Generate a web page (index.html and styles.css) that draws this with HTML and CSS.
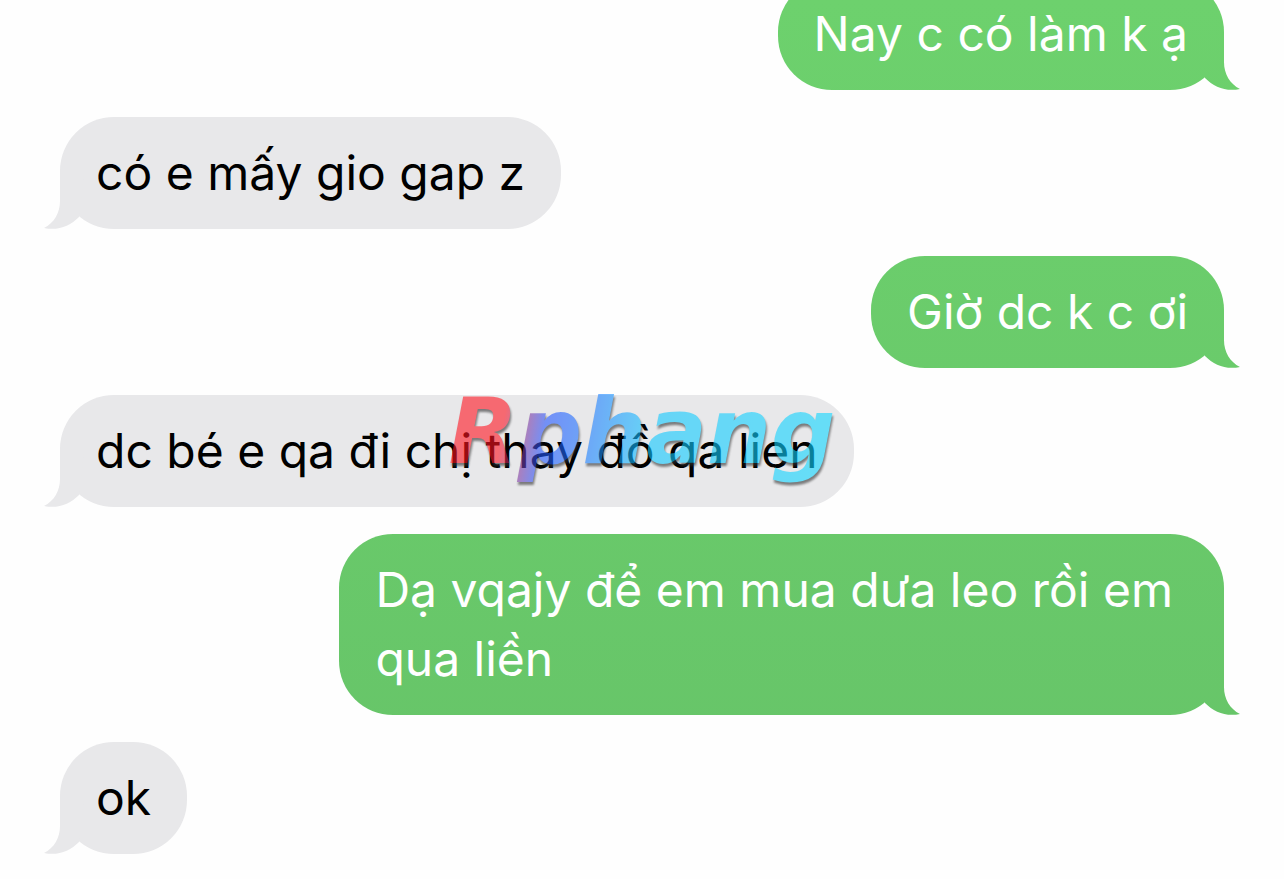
FILE: index.html
```html
<!DOCTYPE html>
<html lang="vi">
<head>
  <meta charset="UTF-8" />
  <meta name="viewport" content="width=device-width, initial-scale=1.0"/>
  <title>Messages</title>
  <link rel="stylesheet" href="styles.css">
</head>
<body>

  <main class="thread">
    <p class="bubble sent">Nay c có làm k ạ</p>
    <p class="bubble received">có e mấy gio gap z</p>
    <p class="bubble sent">Giờ dc k c ơi</p>
    <p class="bubble received">dc bé e qa đi chị thay đồ qa lien</p>
    <p class="bubble sent">Dạ vqajy để em mua dưa leo rồi em qua liền</p>
    <p class="bubble received">ok</p>
  </main>

  <div class="watermark">
    <span class="watermark-text">Rphang</span>
  </div>

</body>
</html>
```

FILE: styles.css
```css
* {
  box-sizing: border-box;
}
body {
  margin: 0;
  background: #fefefe;
  font-family: Inter, "Noto Sans", sans-serif;
  overflow: hidden;
}
/* newest message sits at the bottom, older ones run off the top */
.thread {
  display: flex;
  flex-direction: column;
  justify-content: flex-end;
  gap: 27px;
  height: 100vh;
  padding: 0 60px 25px;
}
.bubble {
  position: relative;
  flex-shrink: 0;
  max-width: 76%;
  margin: 0;
  padding: 21px 36px 22px;
  border-radius: 54px;
  font-size: 48px;
  line-height: 69px;
}
.received {
  align-self: flex-start;
  background: #e8e8ea;
  color: #000;
}
.sent {
  align-self: flex-end;
  background: linear-gradient(#6dd16d, #66c368) fixed;
  color: #fff;
}
/* bubble tail */
.bubble::after {
  content: "";
  position: absolute;
  bottom: 0;
  width: 54px;
  height: 54px;
  background: inherit;
}
.received::after {
  left: -16px;
  clip-path: path("M16 0 V26 C16 38 10 48 0 53 C14 56 26 51 35 42 L40 0 Z");
}
.sent::after {
  right: -16px;
  clip-path: path("M38 0 V26 C38 38 44 48 54 53 C40 56 28 51 19 42 L14 0 Z");
}
.watermark {
  position: fixed;
  inset: 0;
  display: flex;
  align-items: center;
  justify-content: center;
  padding-bottom: 16px;
  pointer-events: none;
  opacity: 0.6;
  filter: drop-shadow(1px 3px 1px #333);
}
.watermark-text {
  font-family: "DejaVu Sans", sans-serif;
  font-size: 90px;
  font-weight: bold;
  font-style: oblique;
  line-height: 120px;
  padding: 0 8px;
  background: linear-gradient(100deg, #ff1420 17%, #2456ff 27%, #1c74ff 36%, #10c8ff 52%, #10d8ff);
  -webkit-background-clip: text;
  background-clip: text;
  color: transparent;
}
```
